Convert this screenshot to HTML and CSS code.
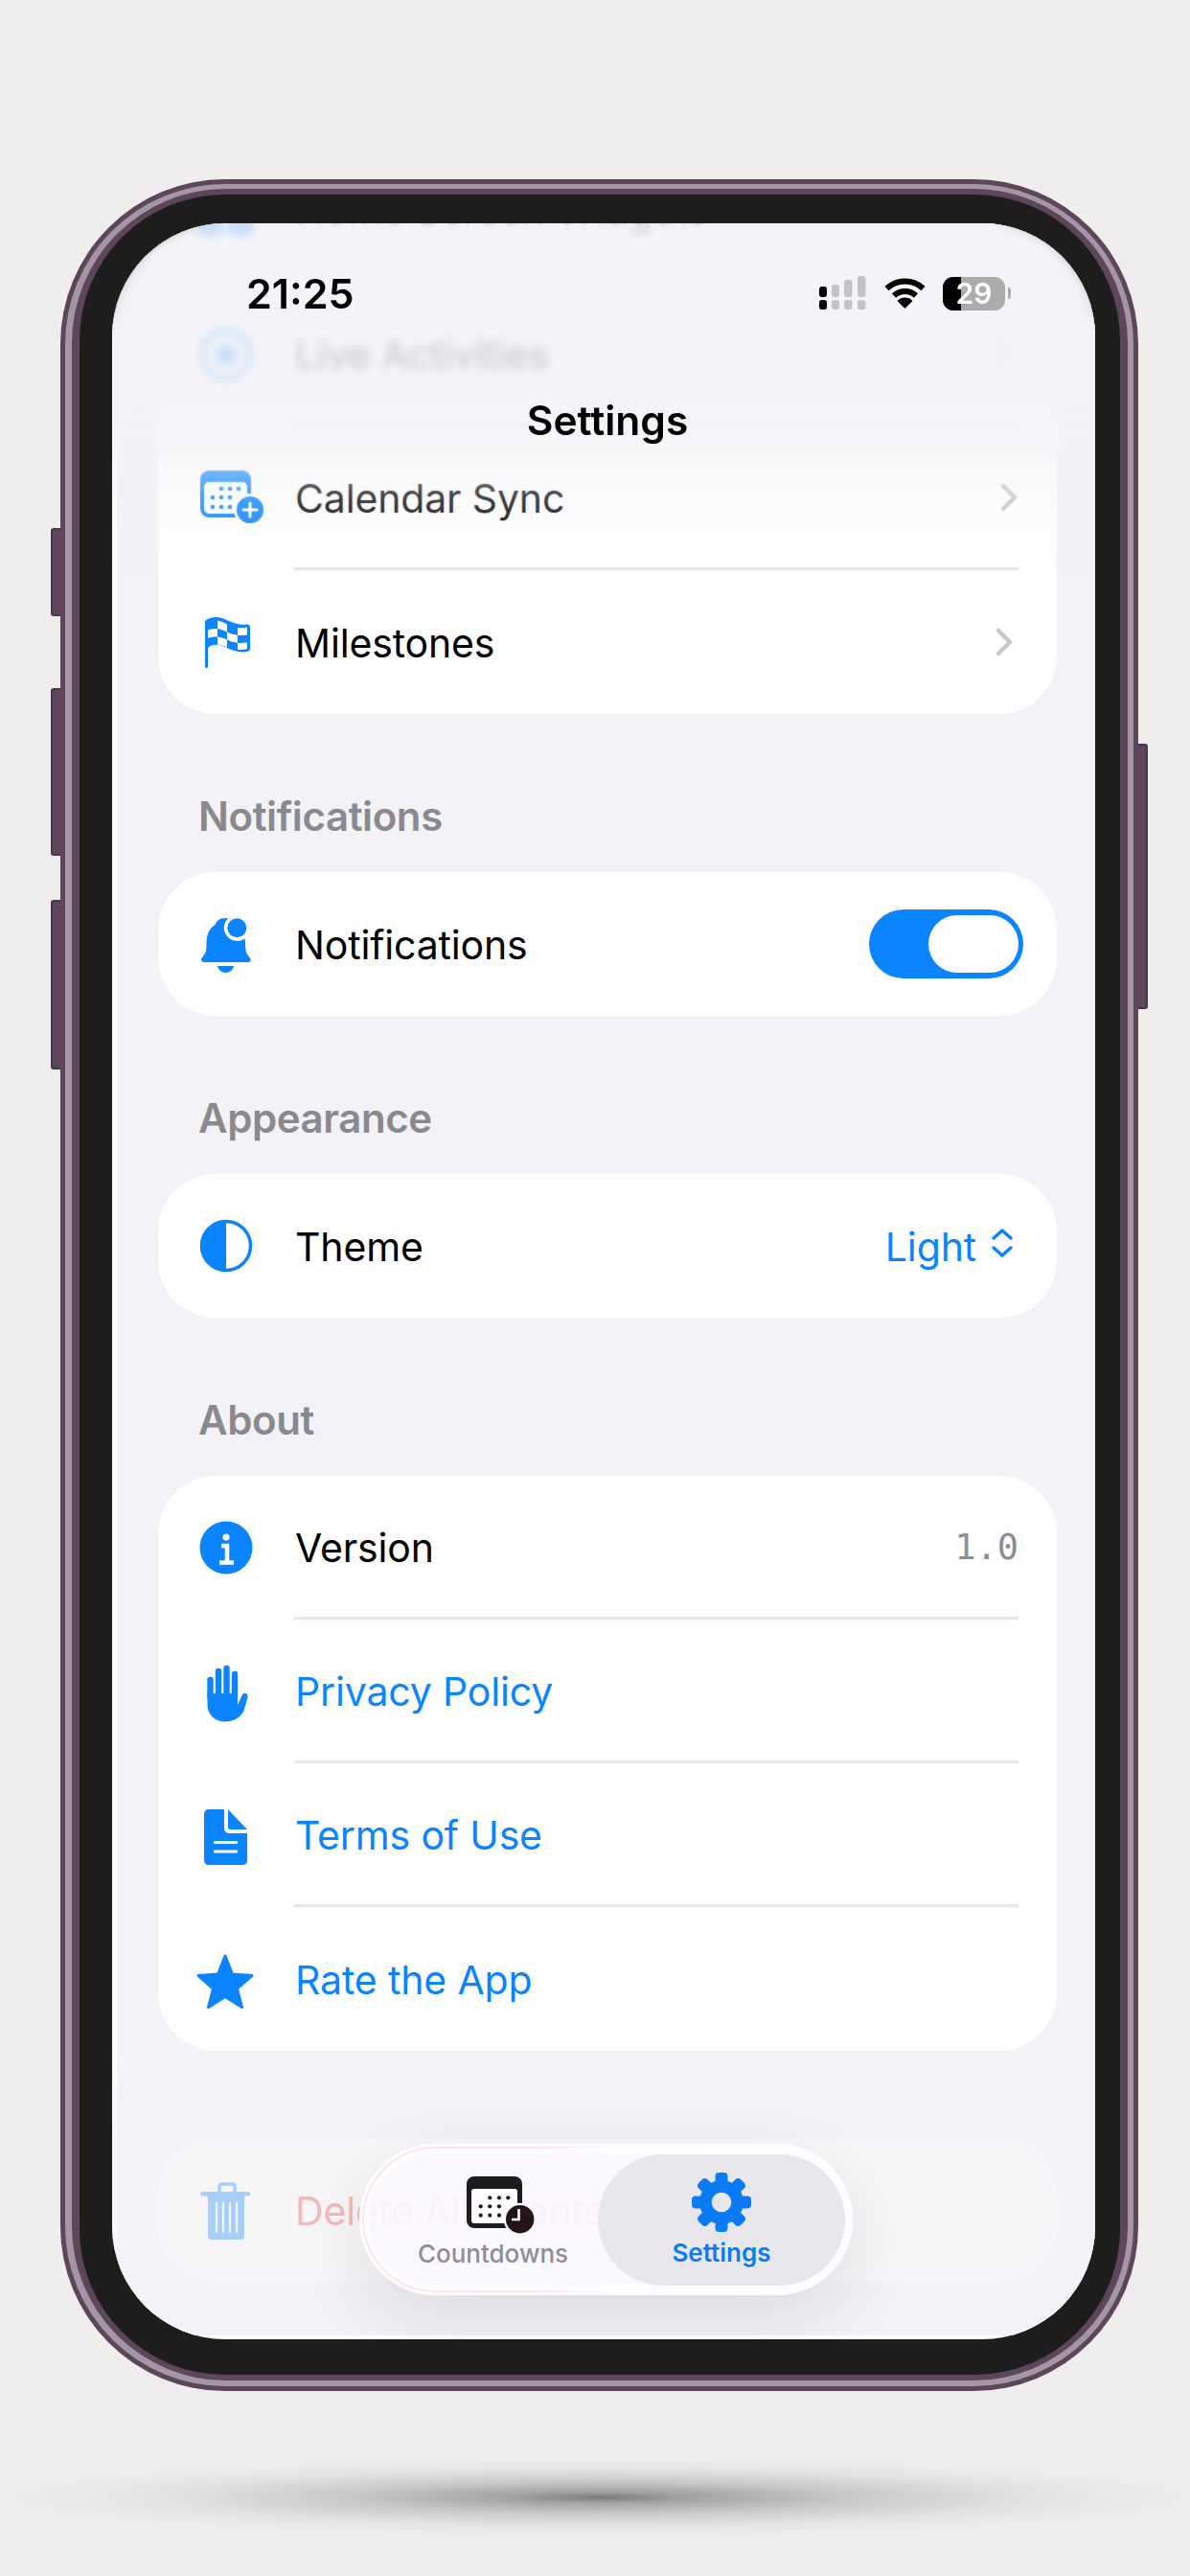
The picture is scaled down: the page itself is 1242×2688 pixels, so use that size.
FILE: index.html
```html
<!DOCTYPE html>
<html lang="en">
  <head>
    <meta charset="utf-8">
    <title>Settings</title>
    <link rel="stylesheet" href="styles.css">
  </head>
  <body>
    <div class="stage">
      <div class="phone">
        <div class="side-button btn-mute"></div>
        <div class="side-button btn-up"></div>
        <div class="side-button btn-down"></div>
        <div class="side-button btn-power"></div>
        <div class="phone-ring">
          <div class="phone-edge">
            <div class="bezel">
              <div class="screen">
                <div class="screen-body">
                  <div class="scroll">
                    <div class="card card-first">
                      <div class="row">
                        <svg class="row-icon" viewBox="0 0 80 64"><rect x="10" y="4" width="27" height="24" rx="6" fill="#0a84ff"/><rect x="42" y="4" width="27" height="24" rx="6" fill="#0a84ff"/><rect x="10" y="34" width="27" height="24" rx="6" fill="#0a84ff"/><rect x="42" y="34" width="27" height="24" rx="6" fill="#0a84ff"/></svg>
                        <div class="row-main"><span class="row-title">Home Screen Widgets</span><svg class="chevron" viewBox="0 0 18 30"><path d="M3 3l12 12L3 27"/></svg></div>
                      </div>
                      <div class="row">
                        <svg class="row-icon" viewBox="0 0 80 64"><circle cx="40" cy="32" r="25" fill="none" stroke="#0a84ff" stroke-width="5"/><circle cx="40" cy="32" r="11" fill="#0a84ff"/></svg>
                        <div class="row-main"><span class="row-title">Live Activities</span><svg class="chevron" viewBox="0 0 18 30"><path d="M3 3l12 12L3 27"/></svg></div>
                      </div>
                      <div class="row">
                        <svg class="row-icon" viewBox="0 0 80 64">
                          <rect x="13" y="3" width="53" height="49" rx="9" fill="#0a84ff"/>
                          <rect x="17" y="15" width="45" height="33" rx="5" fill="#fff"/>
                          <g fill="#0a84ff">
                            <circle cx="35" cy="22" r="2.3"/><circle cx="44" cy="22" r="2.3"/><circle cx="53" cy="22" r="2.3"/>
                            <circle cx="26" cy="31" r="2.3"/><circle cx="35" cy="31" r="2.3"/><circle cx="44" cy="31" r="2.3"/>
                            <circle cx="26" cy="41" r="2.3"/><circle cx="35" cy="41" r="2.3"/><circle cx="44" cy="41" r="2.3"/>
                          </g>
                          <circle cx="65" cy="44" r="17" fill="#fff"/>
                          <circle cx="65" cy="44" r="14" fill="#0a84ff"/>
                          <path d="M65 37v14M58 44h14" stroke="#fff" stroke-width="3" stroke-linecap="round"/>
                        </svg>
                        <div class="row-main"><span class="row-title">Calendar Sync</span><svg class="chevron chevron-warped" viewBox="0 0 18 30"><path d="M3 3l12 12L3 27"/></svg></div>
                      </div>
                      <div class="row">
                        <svg class="row-icon" viewBox="0 0 80 64">
                          <path fill="#0a84ff" d="M18 10C22 6 30 5 36 7C44 10 51 15 61 13.500Q65 13 65 16V39Q65 41 62 42C52 44 44 39 36 36C30 34 25 34 21 38V57.500Q21 59 19.500 59Q18 59 18 57.500Z"/>
                          <g fill="#fff">
                            <path d="M31 9.500C35 10 38 12 41 13.500V21.500C38 20 35 18.500 31 18Z"/>
                            <path d="M52 17C54 17.500 57 17.500 62 16.500V24.500C58 25.500 54 25 52 24.700Z"/>
                            <path d="M21 19.500C24 18.200 27 18 31 18V26.500C27 26.500 24 26.500 21 28Z"/>
                            <path d="M41 21.500C45 23.500 48 24.200 52 24.700V32.700C48 32.200 45 31.500 41 29.500Z"/>
                            <path d="M31 26.500C35 27 38 28 41 29.500V37.500C38 36 35 35 31 34.500Z"/>
                            <path d="M52 32.700C55 33.200 58 33 62 32.300V39C58 40 55 40.300 52 40Z"/>
                          </g>
                        </svg>
                        <div class="row-main"><span class="row-title">Milestones</span><svg class="chevron" viewBox="0 0 18 30"><path d="M3 3l12 12L3 27"/></svg></div>
                      </div>
                    </div>

                    <h2 class="section-label">Notifications</h2>
                    <div class="card">
                      <div class="row">
                        <svg class="row-icon" viewBox="0 0 80 64">
                          <path fill="#0a84ff" d="M39.500 5C33 5 29.500 8.500 28.500 12C21.500 16 19.500 24 19.500 32C19.500 40 18 43 15 46C13 48 14 51 17 51H63C66 51 66.500 48 64.500 46C61 43 60 38 60 30C59 20 54 13 47 10C45 6.500 42 5 39.500 5Z"/>
                          <path fill="#0a84ff" d="M31 55H48C47 59 44 62 39.500 62C35 62 32 59 31 55Z"/>
                          <circle cx="51.300" cy="15.300" r="13.500" fill="#fff"/>
                          <circle cx="51.300" cy="15.300" r="10" fill="#0a84ff"/>
                        </svg>
                        <div class="row-main">
                          <span class="row-title">Notifications</span>
                          <div class="toggle"><div class="toggle-knob"></div></div>
                        </div>
                      </div>
                    </div>

                    <h2 class="section-label">Appearance</h2>
                    <div class="card">
                      <div class="row">
                        <svg class="row-icon" viewBox="0 0 80 64">
                          <circle cx="40" cy="32" r="25.500" fill="none" stroke="#0a84ff" stroke-width="3.500"/>
                          <path fill="#0a84ff" d="M40 5A27 27 0 0 0 40 59Z"/>
                        </svg>
                        <div class="row-main">
                          <span class="row-title">Theme</span>
                          <div class="picker">
                            <span class="row-title link">Light</span>
                            <svg class="picker-arrows" viewBox="0 0 24 32"><path d="M3 11l9-8 9 8M3 21l9 8 9-8"/></svg>
                          </div>
                        </div>
                      </div>
                    </div>

                    <h2 class="section-label">About</h2>
                    <div class="card">
                      <div class="row">
                        <svg class="row-icon" viewBox="0 0 80 64">
                          <circle cx="40" cy="32" r="27.500" fill="#0a84ff"/>
                          <circle cx="40" cy="21" r="3.600" fill="#fff"/>
                          <path d="M35 30H41V47M33 47.500H48" fill="none" stroke="#fff" stroke-width="4.500"/>
                        </svg>
                        <div class="row-main">
                          <span class="row-title">Version</span>
                          <span class="version">1.0</span>
                        </div>
                      </div>
                      <div class="row">
                        <svg class="row-icon" viewBox="0 0 80 64">
                          <path d="M23.500 20V38M32 11V38M40.500 8V38M49 14V38" stroke="#0a84ff" stroke-width="6.400" stroke-linecap="round"/>
                          <path fill="#0a84ff" d="M20.500 34H52V46L56.500 36C58.500 32.500 63.500 34 62.500 38L58.500 52C55.500 59 47.500 63.500 39 63.500C28 63.500 20.500 56 20.500 46Z"/>
                        </svg>
                        <div class="row-main"><span class="row-title link">Privacy Policy</span></div>
                      </div>
                      <div class="row">
                        <svg class="row-icon" viewBox="0 0 80 64">
                          <path fill="#0a84ff" d="M22 5H38V24Q38 30 44 30H62V58Q62 63 57 63H22Q17 63 17 58V10Q17 5 22 5Z"/>
                          <path fill="#0a84ff" d="M42 5L62 26H44Q42 26 42 24Z"/>
                          <path d="M27 39.500H52M27 49H52" stroke="#fff" stroke-width="2.800"/>
                        </svg>
                        <div class="row-main"><span class="row-title link">Terms of Use</span></div>
                      </div>
                      <div class="row">
                        <svg class="row-icon" viewBox="0 0 80 64">
                          <path fill="#0a84ff" stroke="#0a84ff" stroke-width="3" stroke-linejoin="round" d="M39 8L46.500 27L67 28.500L51.500 42L56.500 61.500L39 50.500L21.500 61.500L26.500 42L11 28.500L31.500 27Z"/>
                        </svg>
                        <div class="row-main"><span class="row-title link">Rate the App</span></div>
                      </div>
                    </div>

                    <div class="card card-delete">
                      <div class="row">
                        <svg class="row-icon" viewBox="0 0 80 64">
                          <path d="M33 14V8Q33 5 36 5H46Q49 5 49 8V14" fill="none" stroke="#0a84ff" stroke-width="3.500"/>
                          <rect x="13" y="13" width="52" height="4.500" rx="2" fill="#0a84ff"/>
                          <path fill="#0a84ff" d="M21 17H59V59Q59 63 55 63H25Q21 63 21 59Z"/>
                          <path d="M30 24V56M37 24V56M44 24V56M51 24V56" stroke="#fff" stroke-width="2.200"/>
                        </svg>
                        <div class="row-main"><span class="row-title danger">Delete All Events</span></div>
                      </div>
                    </div>
                  </div>
                </div>

                <div class="top-blur top-blur-strong"></div>
                <div class="top-blur top-blur-soft"></div>
                <div class="top-fade"></div>
                <div class="bottom-fade"></div>

                <div class="status-bar">
                  <span class="time">21:25</span>
                  <div class="status-icons">
                    <svg class="signal" viewBox="0 0 50 36">
                      <rect x="1" y="11" width="8" height="11" rx="3" fill="#000"/>
                      <rect x="1" y="25" width="8" height="10" rx="3" fill="#000"/>
                      <g fill="#c3c3c6">
                        <rect x="14" y="9" width="8" height="13" rx="3"/>
                        <rect x="27" y="4" width="8.500" height="18" rx="3"/>
                        <rect x="41" y="0" width="8.500" height="22" rx="3"/>
                        <rect x="14" y="25" width="8" height="10" rx="3"/>
                        <rect x="27" y="25" width="8.500" height="10" rx="3"/>
                        <rect x="41" y="25" width="8.500" height="10" rx="3"/>
                      </g>
                    </svg>
                    <svg class="wifi" viewBox="0 0 43 32">
                      <path d="M2.500 11A28 28 0 0 1 40.500 11M10 18.500A17 17 0 0 1 33 18.500" fill="none" stroke="#000" stroke-width="6"/>
                      <path d="M21.500 32L13.500 24A11 11 0 0 1 29.500 24Z" fill="#000"/>
                    </svg>
                    <div class="battery">
                      <div class="battery-level"></div>
                      <span class="battery-text">29</span>
                    </div>
                    <div class="battery-nub"></div>
                  </div>
                </div>
                <div class="nav-title">Settings</div>

                <div class="tab-bar">
                  <div class="tab-item tab-countdowns">
                    <svg class="tab-calendar" viewBox="0 0 71 60">
                      <rect x="0" y="0" width="58" height="54" rx="8" fill="#1c1c1e"/>
                      <rect x="5" y="13" width="48" height="36" rx="3" fill="#fff"/>
                      <g fill="#1c1c1e">
                        <circle cx="24.300" cy="22.300" r="2.100"/><circle cx="34" cy="22.300" r="2.100"/><circle cx="43.300" cy="22.300" r="2.100"/>
                        <circle cx="14.700" cy="31.300" r="2.100"/><circle cx="24.300" cy="31.300" r="2.100"/><circle cx="34" cy="31.300" r="2.100"/>
                        <circle cx="14.700" cy="40.700" r="2.100"/><circle cx="24.300" cy="40.700" r="2.100"/><circle cx="34" cy="40.700" r="2.100"/>
                      </g>
                      <circle cx="55.700" cy="44.700" r="17" fill="#fdfcfe"/>
                      <circle cx="55.700" cy="44.700" r="14.700" fill="#231418"/>
                      <path d="M54.500 34V45H47" fill="none" stroke="#fff" stroke-width="2.600"/>
                    </svg>
                    <span class="tab-label">Countdowns</span>
                  </div>
                  <div class="tab-item tab-active">
                    <svg class="tab-gear" viewBox="0 0 62 62">
                      <g fill="#0a7bf5">
                        <circle cx="31" cy="31" r="23"/>
                        <rect x="24.500" y="0" width="13" height="16" rx="4"/>
                        <rect x="24.500" y="0" width="13" height="16" rx="4" transform="rotate(45 31 31)"/>
                        <rect x="24.500" y="0" width="13" height="16" rx="4" transform="rotate(90 31 31)"/>
                        <rect x="24.500" y="0" width="13" height="16" rx="4" transform="rotate(135 31 31)"/>
                        <rect x="24.500" y="0" width="13" height="16" rx="4" transform="rotate(180 31 31)"/>
                        <rect x="24.500" y="0" width="13" height="16" rx="4" transform="rotate(225 31 31)"/>
                        <rect x="24.500" y="0" width="13" height="16" rx="4" transform="rotate(270 31 31)"/>
                        <rect x="24.500" y="0" width="13" height="16" rx="4" transform="rotate(315 31 31)"/>
                      </g>
                      <circle cx="31" cy="31" r="10.300" fill="#e8e8ec"/>
                    </svg>
                    <span class="tab-label tab-label-active">Settings</span>
                  </div>
                </div>
              </div>
            </div>
          </div>
        </div>
      </div>
    </div>
    <div class="floor-shadow"></div>
  </body>
</html>
```

FILE: styles.css
```css
* {
  box-sizing: border-box;
}

html,
body {
  margin: 0;
  height: 2688px;
  overflow: hidden;
}

body {
  background-color: #efeeec;
  font-family: Inter, "Liberation Sans", sans-serif;
}

.stage {
  display: flex;
  padding: 187px 0 0 63px;
}

/* phone frame, three purple bands then the black bezel */
.phone {
  position: relative;
  padding: 5px;
  border-radius: 172px;
  background-color: #5d4659;
}

.phone-ring {
  padding: 5px 6px 6px 7px;
  border-radius: 167px;
  background-color: #a596a5;
}

.phone-edge {
  padding: 6px 8px 6px 8px;
  border-radius: 161px;
  background-color: #5d4659;
}

.bezel {
  padding: 30px 26px 37px 34px;
  border-radius: 152px;
  background-color: #1d1d1b;
}

.side-button {
  position: absolute;
  width: 10px;
  background-color: #5d4659;
  border: 2px solid #4a3550;
  border-right: 0;
  border-radius: 3px 0 0 3px;
}

.btn-mute {
  left: -10px;
  top: 364px;
  height: 92px;
}

.btn-up {
  left: -10px;
  top: 531px;
  height: 175px;
}

.btn-down {
  left: -10px;
  top: 752px;
  height: 177px;
}

.btn-power {
  right: -10px;
  top: 589px;
  height: 277px;
  border: 2px solid #4a3550;
  border-left: 0;
  border-radius: 0 3px 3px 0;
}

.screen {
  position: relative;
  width: 1026px;
  height: 2208px;
  padding: 0 0 4px 5px;
  overflow: hidden;
  border-radius: 118px;
  background-color: #fff;
}

.screen-body {
  height: 100%;
  overflow: hidden;
  background-color: #f2f2f7;
}

.scroll {
  padding: 0 40px 0 43px;
}

.card {
  border-radius: 60px;
  background-color: #fff;
  overflow: hidden;
}

.card-first {
  margin-top: -88px;
}

.card-delete {
  margin-top: 91px;
}

.section-label {
  height: 50px;
  margin: 82px 0 33px 42px;
  color: #8a8a8e;
  font-size: 42px;
  font-weight: 600;
  letter-spacing: -0.4px;
  line-height: 50px;
}

.row {
  display: flex;
  align-items: center;
  height: 150px;
  padding-left: 31px;
}

.row-icon {
  flex: none;
  width: 80px;
  height: 64px;
  overflow: visible;
}

.row-main {
  flex: 1;
  display: flex;
  align-items: center;
  justify-content: space-between;
  align-self: stretch;
  margin-left: 31px;
  margin-right: 40px;
  border-bottom: 3px solid #e6e6e9;
}

.row:last-child .row-main {
  border-bottom: 0;
}

.row-title {
  margin: 2px 0 0 1px;
  color: #000;
  font-size: 41px;
  letter-spacing: -0.15px;
  line-height: 50px;
}

.link {
  color: #0a84ff;
}

.danger {
  color: #ff3b30;
}

.chevron {
  width: 18px;
  height: 30px;
  margin-right: 6px;
  fill: none;
  stroke: #c7c7cc;
  stroke-width: 4.500;
  stroke-linecap: round;
  stroke-linejoin: round;
}

.chevron-warped {
  margin-right: 1px;
}

.toggle {
  display: flex;
  justify-content: flex-end;
  align-items: center;
  width: 161px;
  height: 72px;
  margin-right: -5px;
  padding-right: 5px;
  border-radius: 36px;
  background-color: #0a84ff;
}

.toggle-knob {
  width: 94px;
  height: 60px;
  border-radius: 30px;
  background-color: #fff;
}

.picker {
  display: flex;
  align-items: center;
  gap: 15px;
}

.picker-arrows {
  width: 24px;
  height: 32px;
  margin-right: 5px;
  margin-bottom: 6px;
  fill: none;
  stroke: #0a84ff;
  stroke-width: 3.500;
  stroke-linecap: round;
  stroke-linejoin: round;
}

.version {
  margin-top: 2px;
  color: #8e8e93;
  font-family: "DejaVu Sans Mono", monospace;
  font-size: 37px;
  line-height: 50px;
}

/* top glass, blurred and faded over the scrolled rows */
.top-blur {
  position: absolute;
  top: 0;
  left: 0;
  right: 0;
}

.top-blur-strong {
  height: 250px;
  -webkit-backdrop-filter: blur(5px);
  backdrop-filter: blur(5px);
  -webkit-mask-image: linear-gradient(#000 75%, transparent);
  mask-image: linear-gradient(#000 75%, transparent);
}

.top-blur-soft {
  height: 330px;
  -webkit-backdrop-filter: blur(1.200px);
  backdrop-filter: blur(1.200px);
  -webkit-mask-image: linear-gradient(#000 60%, transparent);
  mask-image: linear-gradient(#000 60%, transparent);
}

.top-fade {
  position: absolute;
  top: 0;
  left: 0;
  right: 0;
  height: 370px;
  background: linear-gradient(rgba(242, 242, 247, 0.82) 0, rgba(242, 242, 247, 0.82) 48%, rgba(242, 242, 247, 0.66) 62%, rgba(242, 242, 247, 0.24) 78%, rgba(242, 242, 247, 0) 100%);
}

.bottom-fade {
  position: absolute;
  left: 0;
  right: 0;
  bottom: 4px;
  height: 310px;
  background: linear-gradient(rgba(242, 242, 247, 0) 0, rgba(242, 242, 247, 0.68) 35%, rgba(242, 242, 247, 0.68) 100%);
}

.status-bar {
  position: absolute;
  top: 48px;
  left: 140px;
  right: 88px;
  display: flex;
  justify-content: space-between;
  align-items: center;
  height: 50px;
}

.time {
  color: #000;
  font-size: 43px;
  font-weight: 600;
  line-height: 50px;
}

.status-icons {
  display: flex;
  align-items: center;
}

.signal {
  width: 50px;
  height: 36px;
}

.wifi {
  width: 43px;
  height: 32px;
  margin-left: 19px;
}

.battery {
  position: relative;
  width: 65px;
  height: 35px;
  margin-left: 18px;
  overflow: hidden;
  border-radius: 11px;
  background-color: #acacac;
  text-align: center;
}

.battery-level {
  position: absolute;
  top: 0;
  bottom: 0;
  left: 0;
  width: 19px;
  background-color: #000;
}

.battery-text {
  position: relative;
  color: #fff;
  font-size: 30px;
  font-weight: 600;
  line-height: 35px;
}

.battery-nub {
  width: 3px;
  height: 12px;
  margin-left: 3px;
  border-radius: 0 3px 3px 0;
  background-color: #acacac;
}

.nav-title {
  position: absolute;
  top: 181px;
  left: 8px;
  right: 0;
  color: #000;
  font-size: 42.500px;
  font-weight: 600;
  line-height: 50px;
  text-align: center;
}

/* floating tab bar */
.tab-bar {
  position: absolute;
  left: 258px;
  top: 2004px;
  display: flex;
  width: 515px;
  height: 158px;
  padding: 11px 8px 10px 10px;
  border-radius: 79px;
  background-color: rgba(252, 250, 254, 0.9);
  box-shadow: inset 0 0 0 10px rgba(255, 255, 255, 0.7), 0 24px 70px rgba(0, 0, 0, 0.09);
}

/* thin pink refraction line along the left of the glass */
.tab-bar::before {
  content: "";
  position: absolute;
  top: 3px;
  right: 3px;
  bottom: 3px;
  left: 3px;
  border: 2px solid rgba(255, 190, 200, 0.4);
  border-radius: 76px;
  -webkit-mask-image: linear-gradient(to right, #000 35%, transparent 50%);
  mask-image: linear-gradient(to right, #000 35%, transparent 50%);
}

.tab-item {
  position: relative;
  display: flex;
  flex-direction: column;
  align-items: center;
  height: 137px;
}

.tab-countdowns {
  flex: 1;
  padding: 23px 0 0 20px;
}

.tab-active {
  width: 258px;
  padding-top: 19px;
  border-radius: 69px;
  background-color: #e8e8ec;
}

.tab-calendar {
  width: 71px;
  height: 60px;
  margin-left: 16px;
}

.tab-gear {
  width: 62px;
  height: 62px;
  margin-bottom: 5px;
}

.tab-label {
  margin-top: 4px;
  color: #8e8e93;
  font-size: 26px;
  font-weight: 500;
  line-height: 34px;
}

.tab-label-active {
  margin-top: 0;
  color: #0a7bf5;
  font-weight: 600;
}

.floor-shadow {
  height: 90px;
  margin-top: 66px;
  background: radial-gradient(ellipse 626px 40px at 626px 45px, #7c7c7c 0, #a3a3a2 15%, #c9c9c8 42%, #e4e3e1 72%, #efeeec 100%);
}
```
